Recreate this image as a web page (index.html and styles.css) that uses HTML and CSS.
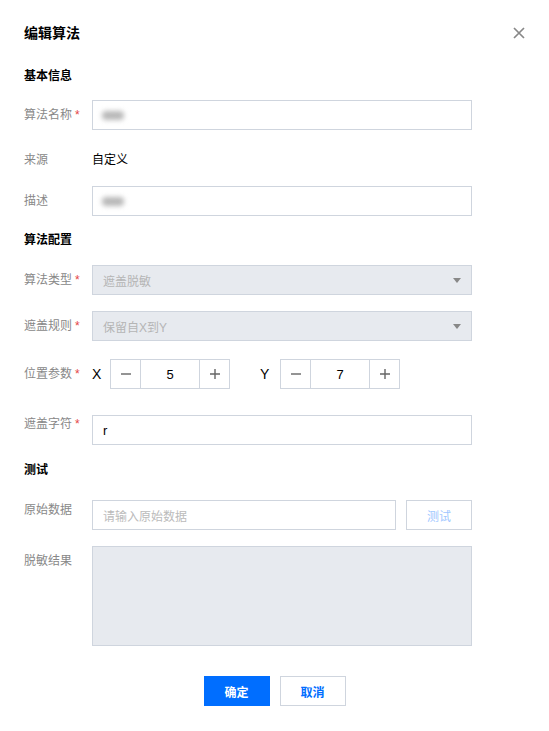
FILE: index.html
```
<!DOCTYPE html>
<html lang="zh">
<head>
<meta charset="utf-8">
<title>编辑算法</title>
<link rel="stylesheet" href="styles.css">
</head>
<body>
<div class="dialog">
  <div class="header">
    <div class="title">编辑算法</div>
    <svg class="close" width="12" height="12" viewBox="0 0 12 12"><path d="M1 1L11 11M11 1L1 11" stroke="#888" stroke-width="1.7" fill="none"/></svg>
  </div>

  <div class="section s1">基本信息</div>
  <div class="row r-name">
    <div class="label">算法名称<span class="star">*</span></div>
    <div class="input"><span class="blur"></span></div>
  </div>
  <div class="row r-source">
    <div class="label">来源</div>
    <div class="value">自定义</div>
  </div>
  <div class="row r-desc">
    <div class="label">描述</div>
    <div class="input"><span class="blur"></span></div>
  </div>

  <div class="section s2">算法配置</div>
  <div class="row r-type">
    <div class="label">算法类型<span class="star">*</span></div>
    <div class="input select"><span class="dis">遮盖脱敏</span><span class="caret"></span></div>
  </div>
  <div class="row r-rule">
    <div class="label">遮盖规则<span class="star">*</span></div>
    <div class="input select"><span class="dis">保留自X到Y</span><span class="caret"></span></div>
  </div>
  <div class="row r-pos">
    <div class="label">位置参数<span class="star">*</span></div>
    <div class="params">
      <span class="axis">X</span>
      <div class="stepper">
        <span class="btn"><svg width="12" height="12" viewBox="0 0 12 12"><path d="M1 6H11" stroke="#666" stroke-width="1.4"/></svg></span>
        <span class="num">5</span>
        <span class="btn"><svg width="12" height="12" viewBox="0 0 12 12"><path d="M1 6H11M6 1V11" stroke="#666" stroke-width="1.4"/></svg></span>
      </div>
      <span class="axis axis-y">Y</span>
      <div class="stepper">
        <span class="btn"><svg width="12" height="12" viewBox="0 0 12 12"><path d="M1 6H11" stroke="#666" stroke-width="1.4"/></svg></span>
        <span class="num">7</span>
        <span class="btn"><svg width="12" height="12" viewBox="0 0 12 12"><path d="M1 6H11M6 1V11" stroke="#666" stroke-width="1.4"/></svg></span>
      </div>
    </div>
  </div>
  <div class="row r-mask">
    <div class="label top lt-mask">遮盖字符<span class="star">*</span></div>
    <div class="input"><span class="text">r</span></div>
  </div>

  <div class="section s3">测试</div>
  <div class="row r-raw">
    <div class="label top lt-raw">原始数据</div>
    <div class="input raw"><span class="ph">请输入原始数据</span></div>
    <button class="test">测试</button>
  </div>
  <div class="row r-result">
    <div class="label top lt-result">脱敏结果</div>
    <div class="textarea"></div>
  </div>

  <div class="footer">
    <button class="primary">确定</button>
    <button class="cancel">取消</button>
  </div>
</div>
</body>
</html>
```
FILE: styles.css
```
* { box-sizing: border-box; }
body {
  margin: 0;
  background: #fff;
  font-family: "Liberation Sans", "Noto Sans CJK SC", sans-serif;
  font-size: 12px;
  color: #000;
}
.dialog { padding: 20px 24px 0; }
.header {
  display: flex;
  justify-content: space-between;
  align-items: center;
  height: 24px;
}
.title { font-size: 14px; font-weight: bold; color: #000; }
.close { display: block; margin-top: 1px; }

.section {
  font-weight: bold;
  line-height: 19px;
  height: 20px;
  padding-top: 1px;
  color: #000;
}
.s1 { margin-top: 22px; }
.s2 { margin-top: 14px; }
.s3 { margin-top: 15px; }

.row { display: flex; width: 448px; }
.label {
  width: 68px;
  flex-shrink: 0;
  color: #888;
  line-height: 29px;
  height: 30px;
  padding-top: 1px;
  white-space: nowrap;
}
.label.top { line-height: 16px; }
.lt-mask { padding-top: 1px; }
.lt-raw { padding-top: 2px; }
.lt-result { padding-top: 7px; }
.star { color: #e54545; margin-left: 3px; font-size: 12px; }

.r-name { margin-top: 14px; }
.r-source { margin-top: 15px; height: 30px; }
.r-desc { margin-top: 11px; }
.r-type { margin-top: 15px; }
.r-rule { margin-top: 16px; }
.r-pos { margin-top: 18px; }
.r-mask { margin-top: 26px; }
.r-raw { margin-top: 20px; }
.r-result { margin-top: 16px; }

.value { line-height: 29px; height: 30px; padding-top: 1px; color: #000; }

.input {
  width: 380px;
  height: 30px;
  border: 1px solid #cfd5de;
  padding: 0 10px;
  display: flex;
  align-items: center;
  background: #fff;
}
.blur {
  display: block;
  width: 22px;
  height: 9px;
  margin-left: -1px;
  background: #b8b8b8;
  border-radius: 4px;
  filter: blur(2.5px);
}
.select {
  background: #e7eaef;
  justify-content: space-between;
}
.dis { color: #b5b5b5; }
.caret {
  width: 0;
  height: 0;
  border-left: 4px solid transparent;
  border-right: 4px solid transparent;
  border-top: 5px solid #888;
}
.text { color: #000; font-size: 13px; }

.params { display: flex; align-items: center; }
.axis { font-size: 14px; width: 18px; color: #000; }
.axis-y { margin-left: 30px; width: 20px; }
.stepper {
  display: flex;
  height: 30px;
  border: 1px solid #cfd5de;
}
.stepper .btn {
  width: 29px;
  display: flex;
  align-items: center;
  justify-content: center;
}
.stepper .num {
  width: 60px;
  border-left: 1px solid #cfd5de;
  border-right: 1px solid #cfd5de;
  display: flex;
  align-items: center;
  justify-content: center;
  font-size: 13px;
}

.raw { width: 304px; }
.ph { color: #bbb; }
.test {
  margin-left: 10px;
  width: 66px;
  height: 30px;
  border: 1px solid #cfd5de;
  background: #fff;
  color: #9fc7ff;
  font-family: inherit;
  font-size: 12px;
  padding: 0;
}
.textarea {
  width: 380px;
  height: 100px;
  border: 1px solid #cfd5de;
  background: #e7eaef;
}

.footer {
  display: flex;
  justify-content: center;
  gap: 10px;
  margin-top: 30px;
  margin-left: -24px;
  margin-right: -24px;
}
.footer button {
  width: 66px;
  height: 30px;
  font-family: inherit;
  font-size: 12px;
  font-weight: bold;
  padding: 0;
}
.primary {
  background: #006eff;
  border: 1px solid #006eff;
  color: #fff;
}
.cancel {
  background: #fff;
  border: 1px solid #cfd5de;
  color: #006eff;
}
```
